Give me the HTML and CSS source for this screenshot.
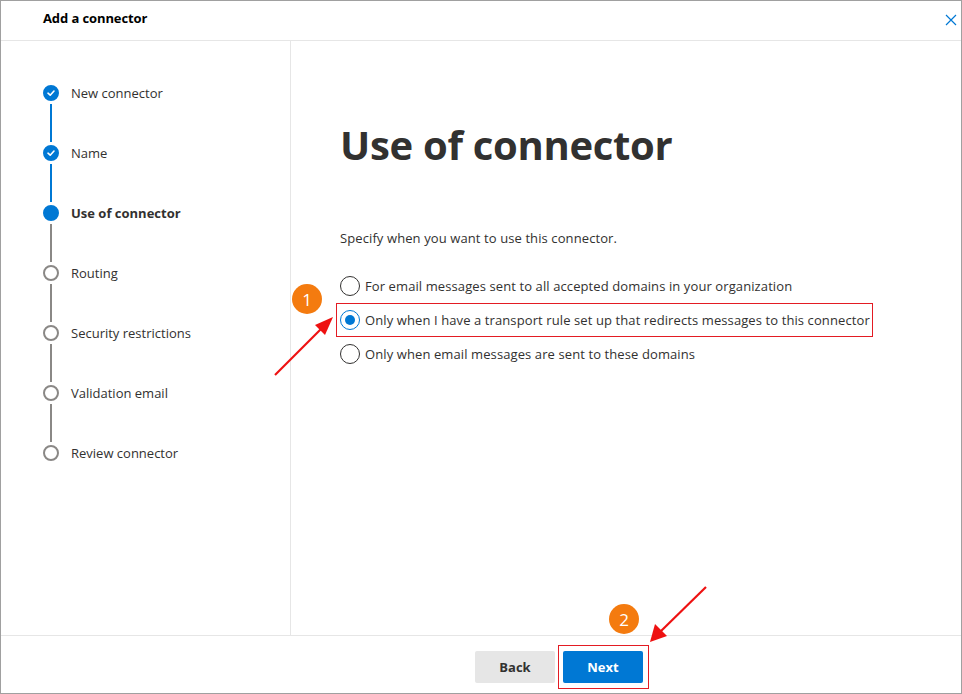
FILE: index.html
```html
<!DOCTYPE html>
<html>
<head>
<meta charset="utf-8">
<link rel="stylesheet" href="styles.css">
</head>
<body>
<div class="frame">
  <header class="header">
    <div class="header-title">Add a connector</div>
    <svg class="close" width="12" height="12" viewBox="0 0 12 12"><path d="M1 1L11 11M11 1L1 11" stroke="#0078d4" stroke-width="1.2" fill="none"/></svg>
  </header>
  <div class="main">
    <nav class="steps">
      <div class="step done">
        <div class="marker"><span class="dot"><svg width="10" height="10" viewBox="0 0 10 10"><path d="M2 5.2L4.2 7.2L8 3" stroke="#fff" stroke-width="1.6" fill="none" stroke-linecap="round" stroke-linejoin="round"/></svg></span><span class="line"></span></div>
        <div class="label">New connector</div>
      </div>
      <div class="step done">
        <div class="marker"><span class="dot"><svg width="10" height="10" viewBox="0 0 10 10"><path d="M2 5.2L4.2 7.2L8 3" stroke="#fff" stroke-width="1.6" fill="none" stroke-linecap="round" stroke-linejoin="round"/></svg></span><span class="line"></span></div>
        <div class="label">Name</div>
      </div>
      <div class="step current">
        <div class="marker"><span class="dot"></span><span class="line"></span></div>
        <div class="label">Use of connector</div>
      </div>
      <div class="step">
        <div class="marker"><span class="dot"></span><span class="line"></span></div>
        <div class="label">Routing</div>
      </div>
      <div class="step">
        <div class="marker"><span class="dot"></span><span class="line"></span></div>
        <div class="label">Security restrictions</div>
      </div>
      <div class="step">
        <div class="marker"><span class="dot"></span><span class="line"></span></div>
        <div class="label">Validation email</div>
      </div>
      <div class="step last">
        <div class="marker"><span class="dot"></span></div>
        <div class="label">Review connector</div>
      </div>
    </nav>
    <section class="content">
      <h1 class="title">Use of connector</h1>
      <p class="desc">Specify when you want to use this connector.</p>
      <div class="options">
        <div class="option"><span class="radio"></span><span>For email messages sent to all accepted domains in your organization</span></div>
        <div class="option selected highlight"><span class="radio"></span><span>Only when I have a transport rule set up that redirects messages to this connector</span></div>
        <div class="option"><span class="radio"></span><span>Only when email messages are sent to these domains</span></div>
      </div>
    </section>
  </div>
  <footer class="footer">
    <button class="btn btn-back">Back</button>
    <button class="btn btn-next">Next</button>
  </footer>

  <div class="badge badge-1">1</div>
  <div class="badge badge-2">2</div>
  <div class="next-box"></div>
  <svg class="arrows" width="962" height="694" viewBox="0 0 962 694">
    <line x1="275" y1="375" x2="322" y2="328" stroke="#ee1111" stroke-width="2.2"/>
    <polygon points="333,317 315,325 325,335" fill="#ee1111"/>
    <line x1="706" y1="587" x2="660" y2="632" stroke="#ee1111" stroke-width="2.2"/>
    <polygon points="650,642 655,624 667,636" fill="#ee1111"/>
  </svg>
</div>
</body>
</html>
```

FILE: styles.css
```css
* { box-sizing: border-box; }
html, body { margin: 0; padding: 0; background: #fff; }
body { font-family: "Open Sans", "Noto Sans", sans-serif; color: #323130; }

.frame {
  position: relative;
  width: 962px;
  height: 694px;
  border: 1px solid #a0a0a0;
  display: flex;
  flex-direction: column;
  overflow: hidden;
}

.header {
  height: 40px;
  flex: none;
  border-bottom: 1px solid #e6e6e6;
  display: flex;
  align-items: center;
  justify-content: space-between;
  padding: 0 4px 6px 42px;
}
.header-title {
  font-size: 13px;
  font-weight: 700;
  color: #000;
  letter-spacing: -0.1px;
}
.close { margin-top: 4px; }

.main {
  flex: 1;
  display: flex;
  min-height: 0;
}

.steps {
  width: 290px;
  flex: none;
  border-right: 1px solid #e6e6e6;
  padding: 44px 0 0 42px;
  display: flex;
  flex-direction: column;
}
.step {
  display: flex;
  height: 60px;
}
.marker {
  width: 16px;
  display: flex;
  flex-direction: column;
  align-items: center;
}
.dot {
  width: 16px;
  height: 16px;
  border-radius: 50%;
  border: 2px solid #8a8886;
  flex: none;
  display: flex;
  align-items: center;
  justify-content: center;
}
.step.done .dot, .step.current .dot {
  background: #0078d4;
  border-color: #0078d4;
}
.line {
  width: 2px;
  flex: 1;
  margin: 3px 0 3px;
  background: #8a8886;
}
.step.done .line { background: #0078d4; }
.label {
  margin-left: 12px;
  font-size: 13px;
  line-height: 16px;
  color: #323130;
  letter-spacing: 0;
}
.step.current .label { font-weight: 700; }

.content {
  flex: 1;
  padding: 74px 0 0 49px;
}
.title {
  margin: 0;
  font-size: 40px;
  font-weight: 700;
  line-height: 60px;
  color: #323130;
  letter-spacing: -0.3px;
}
.desc {
  margin: 53px 0 0 0;
  font-size: 13px;
  line-height: 20px;
  letter-spacing: 0.1px;
}
.options {
  margin-top: 21px;
  margin-left: -4px;
  display: flex;
  flex-direction: column;
}
.option {
  display: flex;
  align-items: center;
  height: 34px;
  padding-left: 4px;
  font-size: 13px;
  letter-spacing: 0.1px;
  width: 537px;
}
.option.highlight { border: 1px solid #e31b23; padding-left: 3px; }
.radio {
  width: 20px;
  height: 20px;
  border-radius: 50%;
  border: 1px solid #323130;
  margin-right: 5px;
  flex: none;
  position: relative;
}
.option.selected .radio { border-color: #0078d4; }
.option.selected .radio::after {
  content: "";
  position: absolute;
  left: 4px; top: 4px;
  width: 10px; height: 10px;
  border-radius: 50%;
  background: #0078d4;
}

.footer {
  height: 58px;
  flex: none;
  border-top: 1px solid #e6e6e6;
  display: flex;
  justify-content: center;
  padding-top: 15px;
  padding-left: 156px;
  gap: 8px;
}
.btn {
  width: 80px;
  height: 32px;
  border: none;
  border-radius: 2px;
  font-family: inherit;
  font-size: 13px;
  font-weight: 700;
}
.btn-back { background: #e6e6e6; color: #323130; }
.btn-next { background: #0078d4; color: #fff; }

.badge {
  position: absolute;
  width: 30px;
  height: 30px;
  border-radius: 50%;
  background: #f47b0f;
  color: #fff;
  font-size: 17px;
  display: flex;
  align-items: center;
  justify-content: center;
}
.badge-1 { left: 291px; top: 283px; }
.badge-2 { left: 608px; top: 603px; }
.next-box {
  position: absolute;
  left: 557px; top: 644px;
  width: 91px; height: 44px;
  border: 1px solid #e31b23;
}
.arrows { position: absolute; left: -1px; top: -1px; pointer-events: none; }
```
